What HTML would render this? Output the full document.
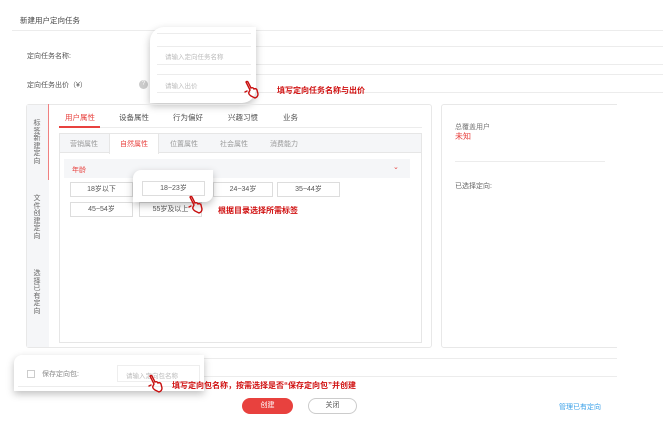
<!DOCTYPE html>
<html><head><meta charset="utf-8"><style>
*{margin:0;padding:0;box-sizing:border-box}
body{width:663px;height:433px;overflow:hidden;background:#fff;font-family:"Liberation Sans","Noto Sans CJK SC",sans-serif;font-size:7px;color:#555;position:relative}
.a{position:absolute;white-space:nowrap}
.ln{position:absolute;background:#ececec;height:1px}
.red{color:#e8413e}
.tip{position:absolute;color:#d01010;font-weight:bold;font-size:8px;white-space:nowrap}
.btn{position:absolute;border:1px solid #ddd;height:15px;line-height:13px;text-align:center;color:#555;background:#fff;font-size:7px}
.vt{position:absolute;left:33px;width:8px;font-size:7px;line-height:7.6px;color:#666;text-align:center;white-space:normal}
.pop{position:absolute;background:#fff;box-shadow:0 3px 8px rgba(0,0,0,.25)}
svg.h{position:absolute}
</style></head><body>
<div class="a" style="left:20px;top:15px;font-size:7.5px;color:#444">新建用户定向任务</div>
<div class="ln" style="left:12px;top:30px;width:651px"></div>
<div class="a" style="left:27px;top:51px">定向任务名称:</div>
<div class="a" style="left:27px;top:80px">定向任务出价（¥）</div>
<div class="a" style="left:139px;top:80px;width:9px;height:9px;border-radius:50%;background:#ccc;color:#fff;font-size:6px;text-align:center;line-height:9px">?</div>
<div class="ln" style="left:155px;top:46px;width:508px"></div>
<div class="ln" style="left:155px;top:64px;width:508px"></div>
<div class="ln" style="left:155px;top:74px;width:508px"></div>
<div class="ln" style="left:155px;top:92px;width:508px"></div>
<div class="pop" style="left:150px;top:27px;width:106px;height:76px;border-radius:14px 0 14px 0"></div>
<div class="ln" style="left:157px;top:33px;width:94px"></div>
<div class="ln" style="left:157px;top:46px;width:94px"></div>
<div class="a" style="left:165px;top:51px;color:#bbb;font-size:6.5px">请输入定向任务名称</div>
<div class="ln" style="left:157px;top:64px;width:94px"></div>
<div class="ln" style="left:157px;top:74px;width:94px"></div>
<div class="a" style="left:165px;top:80px;color:#bbb;font-size:6.5px">请输入出价</div>
<div class="ln" style="left:157px;top:92px;width:94px"></div>
<svg class="h" style="left:243px;top:80px" width="18" height="20" viewBox="0 0 18 20" fill="none" stroke="#c81010" stroke-width="1.4" stroke-linecap="round"><path d="M3 2 L7 10 M7 10 L6 12 Q5 14 8 16 L12 18 Q15 17 15 14 L14 10 Q13 8 11 9 Q10 7 8 8 L5 2 Q4 1 3 2 M2 12 L4 11"/></svg>
<div class="tip" style="left:277px;top:85px">填写定向任务名称与出价</div>

<div class="a" style="left:26px;top:104px;width:406px;height:244px;border:1px solid #e8e8e8;border-radius:3px"></div>
<div class="a" style="left:27px;top:105px;width:22px;height:242px;background:#f5f6f8"></div>
<div class="a" style="left:48px;top:104px;width:1px;height:76px;background:#f08080"></div>
<div class="vt" style="top:120px">标签新建定向</div>
<div class="vt" style="top:195px">文件创建定向</div>
<div class="vt" style="top:270px">选择已有定向</div>
<div class="ln" style="left:59px;top:127px;width:363px"></div>
<div class="a" style="left:59px;top:126px;width:41px;height:2px;background:#e8413e"></div>
<div class="a red" style="left:65px;top:112px;font-size:7.5px">用户属性</div>
<div class="a" style="left:119px;top:112px;font-size:7.5px">设备属性</div>
<div class="a" style="left:173px;top:112px;font-size:7.5px">行为偏好</div>
<div class="a" style="left:228px;top:112px;font-size:7.5px">兴趣习惯</div>
<div class="a" style="left:283px;top:112px;font-size:7.5px">业务</div>
<div class="a" style="left:59px;top:133px;width:363px;height:210px;border:1px solid #e6e6e6"></div>
<div class="a" style="left:60px;top:134px;width:361px;height:19px;background:#f5f6f8;border-bottom:1px solid #e6e6e6"></div>
<div class="a" style="left:109px;top:134px;width:50px;height:20px;background:#fff;border-left:1px solid #e6e6e6;border-right:1px solid #e6e6e6"></div>
<div class="a" style="left:70px;top:139px;color:#999">营销属性</div>
<div class="a red" style="left:120px;top:139px">自然属性</div>
<div class="a" style="left:170px;top:139px;color:#999">位置属性</div>
<div class="a" style="left:220px;top:139px;color:#999">社会属性</div>
<div class="a" style="left:270px;top:139px;color:#999">消费能力</div>
<div class="a" style="left:64px;top:159px;width:346px;height:19px;background:#f5f6f8"></div>
<div class="a red" style="left:72px;top:165px">年龄</div>
<div class="a" style="left:393px;top:163px;color:#e8413e;font-size:7px">⌄</div>
<div class="btn" style="left:70px;top:182px;width:63px">18岁以下</div>
<div class="btn" style="left:213px;top:182px;width:60px">24~34岁</div>
<div class="btn" style="left:277px;top:182px;width:63px">35~44岁</div>
<div class="btn" style="left:70px;top:202px;width:63px">45~54岁</div>
<div class="btn" style="left:139px;top:202px;width:63px">55岁及以上</div>
<div class="pop" style="left:133px;top:170px;width:80px;height:32px;border-radius:8px 0 8px 0"></div>
<div class="btn" style="left:142px;top:181px;width:63px">18~23岁</div>
<svg class="h" style="left:187px;top:195px" width="18" height="20" viewBox="0 0 18 20" fill="none" stroke="#c81010" stroke-width="1.4" stroke-linecap="round"><path d="M3 2 L7 10 M7 10 L6 12 Q5 14 8 16 L12 18 Q15 17 15 14 L14 10 Q13 8 11 9 Q10 7 8 8 L5 2 Q4 1 3 2 M2 12 L4 11"/></svg>
<div class="tip" style="left:218px;top:205px">根据目录选择所需标签</div>

<div class="a" style="left:441px;top:104px;width:190px;height:244px;border:1px solid #e8e8e8;border-radius:3px"></div>
<div class="a" style="left:617px;top:100px;width:46px;height:255px;background:#fff"></div>
<div class="a" style="left:455px;top:122px;color:#777">总覆盖用户</div>
<div class="a red" style="left:455px;top:131px;font-size:8px">未知</div>
<div class="ln" style="left:455px;top:161px;width:150px"></div>
<div class="a" style="left:455px;top:181px;color:#666">已选择定向:</div>

<div class="ln" style="left:20px;top:358px;width:597px"></div>
<div class="ln" style="left:20px;top:376px;width:597px"></div>
<div class="pop" style="left:14px;top:355px;width:190px;height:36px;border-radius:8px 0 0 0"></div>
<div class="ln" style="left:18px;top:386px;width:183px"></div>
<div class="a" style="left:27px;top:370px;width:8px;height:8px;border:1px solid #ccc"></div>
<div class="a" style="left:42px;top:369px;color:#888">保存定向包:</div>
<div class="a" style="left:117px;top:365px;width:83px;height:17px;border:1px solid #eee;color:#bbb;font-size:6.5px;padding:4px 0 0 8px">请输入定向包名称</div>
<svg class="h" style="left:147px;top:374px" width="18" height="20" viewBox="0 0 18 20" fill="none" stroke="#c81010" stroke-width="1.4" stroke-linecap="round"><path d="M3 2 L7 10 M7 10 L6 12 Q5 14 8 16 L12 18 Q15 17 15 14 L14 10 Q13 8 11 9 Q10 7 8 8 L5 2 Q4 1 3 2 M2 12 L4 11"/></svg>
<div class="tip" style="left:172px;top:380px">填写定向包名称，按需选择是否“保存定向包”并创建</div>
<div class="a" style="left:242px;top:398px;width:51px;height:16px;border-radius:8px;background:#e8413e;color:#fff;text-align:center;line-height:16px">创建</div>
<div class="a" style="left:308px;top:398px;width:49px;height:16px;border-radius:8px;border:1px solid #ccc;text-align:center;line-height:14px;color:#555">关闭</div>
<div class="a" style="left:559px;top:402px;color:#3aa0e8">管理已有定向</div>
</body></html>
